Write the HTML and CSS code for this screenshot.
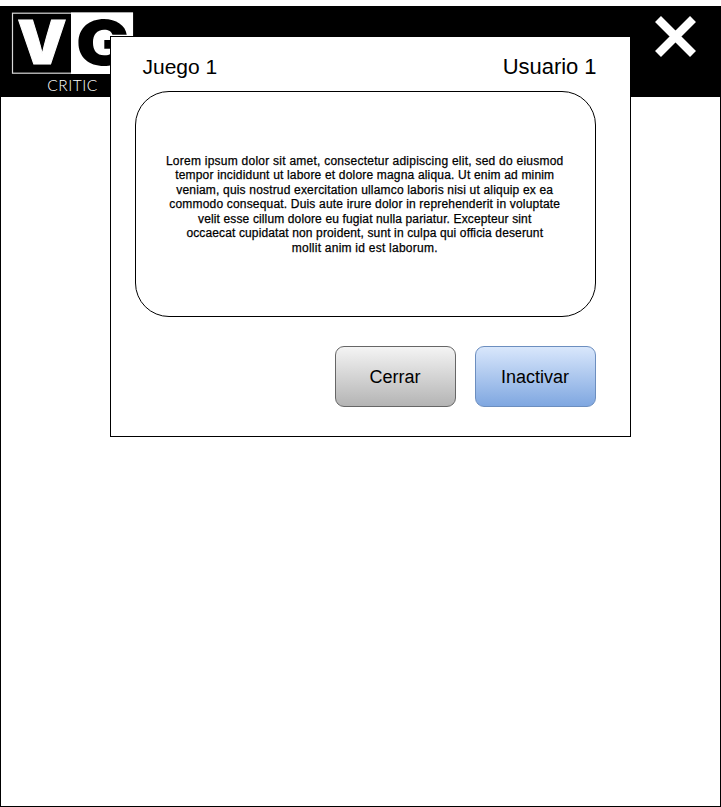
FILE: index.html
```html
<!DOCTYPE html>
<html lang="es">
<head>
<meta charset="utf-8">
<title>VG Critic</title>
<link rel="stylesheet" href="styles.css">
</head>
<body>
<main class="page">
  <header class="header">
    <svg class="logo" width="124" height="84" viewBox="0 0 124 84" aria-label="VG Critic">
      <rect x="1.5" y="1.2" width="120" height="60" fill="#000" stroke="#d8d8d8" stroke-width="1.2"/>
      <rect x="60" y="0.5" width="62" height="61.5" fill="#fff"/>
      <text class="logo-letter logo-v" x="6.3" y="52.2" textLength="49.4" lengthAdjust="spacingAndGlyphs">V</text>
      <text class="logo-letter" x="65" y="53" textLength="54" lengthAdjust="spacingAndGlyphs">G</text>
      <text class="logo-sub" x="36.3" y="78.8" textLength="50">CRITIC</text>
    </svg>
    <svg class="close" width="42" height="42" viewBox="0 0 42 42" aria-label="Cerrar">
      <path d="M3 3 L38 38 M38 3 L3 38" stroke="#fff" stroke-width="8.4"/>
    </svg>
  </header>
  <section class="dialog">
    <div class="dialog-head">
      <h1 class="game">Juego 1</h1>
      <span class="user">Usuario 1</span>
    </div>
    <div class="review">
      <p>Lorem ipsum dolor sit amet, consectetur adipiscing elit, sed do eiusmod<br><span class="snug">tempor incididunt ut labore et dolore magna aliqua. Ut enim ad minim<br>veniam, quis nostrud exercitation ullamco laboris nisi ut aliquip ex ea<br>commodo consequat. Duis aute irure dolor in reprehenderit in voluptate</span><br><span class="tight">velit esse cillum dolore eu fugiat nulla pariatur. Excepteur sint<br>occaecat cupidatat non proident, sunt in culpa qui officia deserunt</span><br>mollit anim id est laborum.</p>
    </div>
    <div class="actions">
      <button class="btn btn-grey">Cerrar</button>
      <button class="btn btn-blue">Inactivar</button>
    </div>
  </section>
</main>
</body>
</html>
```
FILE: styles.css
```css
* { box-sizing: border-box; }
body {
  margin: 0;
  padding-top: 6px;
  background: #fff;
  color: #000;
  font-family: "Liberation Sans", Arial, sans-serif;
}
.page {
  position: relative;
  width: 721px;
  height: 801px;
  border: 1px solid #000;
}
.header {
  display: flex;
  justify-content: space-between;
  align-items: flex-start;
  height: 90px;
  padding: 5px 23px 0 10px;
  background: #000;
}
.logo { overflow: visible; }
.logo-letter { font: 900 62px Inter, sans-serif; fill: #000; }
.logo-v { font-size: 60.5px; fill: #fff; stroke: #fff; stroke-width: 1; }
.logo-sub { font: 300 15.5px Lato, sans-serif; fill: #fff; }
.close { margin-top: 4px; }
.dialog {
  position: absolute;
  left: 109px;
  top: 29px;
  width: 521px;
  height: 401px;
  padding: 0 34px 0 24px;
  background: #fff;
  border: 1px solid #000;
}
.dialog-head {
  display: flex;
  justify-content: space-between;
  align-items: center;
  height: 54px;
  padding: 5px 0 0 7.5px;
}
.game { margin: 0; font-size: 21px; font-weight: 400; }
.user { margin-right: -0.5px; font-size: 22px; letter-spacing: -0.05px; }
.review {
  display: flex;
  align-items: center;
  justify-content: center;
  height: 226px;
  width: 461px;
  padding: 1px 1.5px 0 0;
  border: 1px solid #000;
  border-radius: 34px;
}
.review p {
  margin: 0;
  font-size: 12px;
  line-height: 14.4px;
  letter-spacing: 0.245px;
  text-align: center;
  white-space: nowrap;
  -webkit-text-stroke: 0.25px #000;
}
.snug { letter-spacing: 0.18px; }
.tight { letter-spacing: 0.13px; }
.actions {
  display: flex;
  justify-content: flex-end;
  gap: 19px;
  margin-top: 29px;
}
.btn {
  width: 121px;
  height: 61px;
  padding: 2px 1px 0 0;
  border-radius: 9px;
  color: #000;
  font: 18px "Liberation Sans", Arial, sans-serif;
}
.btn-grey {
  border: 1px solid #666;
  background: linear-gradient(#f5f5f5, #b3b3b3) border-box;
}
.btn-blue {
  border: 1px solid #6c8ebf;
  background: linear-gradient(#dae8fc, #7ea6e0) border-box;
}
```
